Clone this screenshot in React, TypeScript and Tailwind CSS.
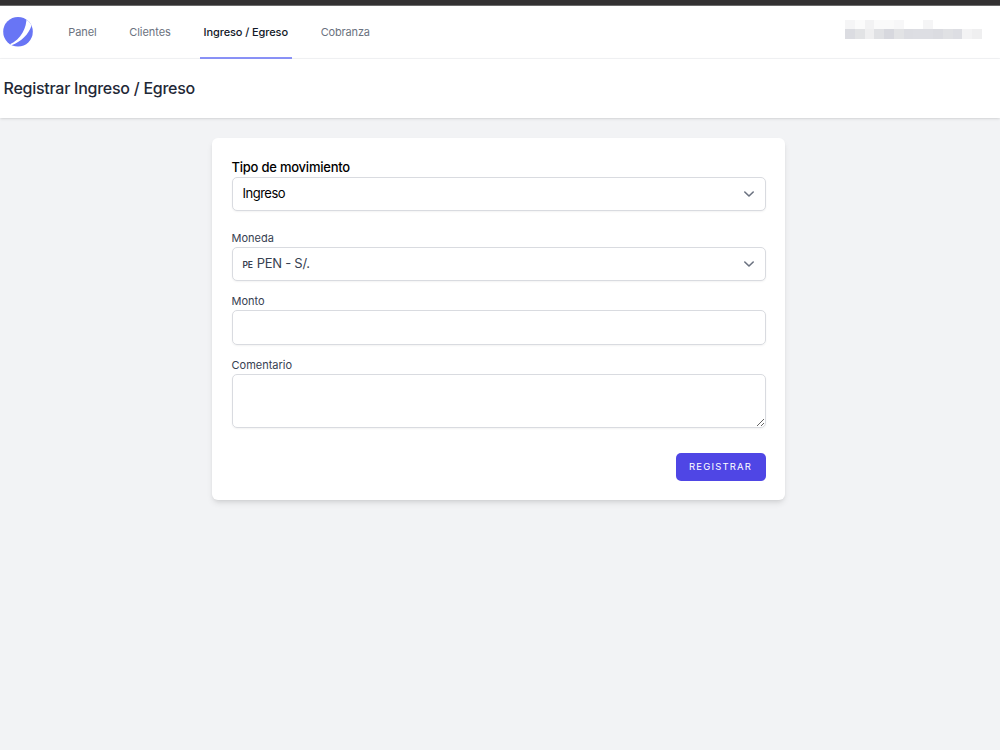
import { ReactNode } from "react"
import clsx from "clsx"

const navLinks = [
  { label: "Panel", width: "w-[35px]", tracking: "tracking-[-0.1px]" },
  { label: "Clientes", width: "w-[49px]", tracking: "tracking-[-0.05px]" },
  { label: "Ingreso / Egreso", width: "w-[91.5px]", tracking: "tracking-[-0.1px]", active: true },
  { label: "Cobranza", width: "w-[56.5px]", tracking: "tracking-[-0.15px]" },
]

const maskedTop = ["#f5f5f6", "#fbfbfb", "#f2f2f3", "#fafafa", "#fafafa", "#f7f7f8", "#fff", "#fff", "#f5f5f6", "#fff", "#fff", "#fff", "#fff", "#fff"]
const maskedBottom = ["#dbdce1", "#e2e3e5", "#efeff0", "#e0e1e4", "#d7d8de", "#e2e3e5", "#dcdde2", "#dddee3", "#dddee3", "#dbdce1", "#e0e1e4", "#dddee3", "#f3f3f4", "#efeff0"]

const Logo = () => (
  <svg viewBox="0 0 30 30" className="h-[30px] w-[30px]">
    <defs>
      <clipPath id="disc">
        <circle cx="15" cy="14.8" r="14.8" />
      </clipPath>
    </defs>
    <g clipPath="url(#disc)">
      <rect width="30" height="30" fill="#6875f5" />
      <path d="M23.6 0C23.6 11 18.5 22 6.5 27.5L8.5 28.3C18.5 24.5 25.5 17.5 28.6 8.5L31 0Z" fill="#fff" />
    </g>
  </svg>
)

const MaskedUser = () => (
  <div className="mt-[13.5px] w-[137px]">
    {[maskedTop, maskedBottom].map((row, i) => (
      <div key={i} className="flex h-[9.75px]">
        {row.map((color, j) => (
          <div key={j} className="flex-1" style={{ backgroundColor: color }} />
        ))}
      </div>
    ))}
  </div>
)

const Field = ({ label, className, children }: { label: ReactNode; className?: string; children: ReactNode }) => (
  <label className={clsx("flex flex-col", className)}>
    <span className="flex h-5 items-center whitespace-nowrap">{label}</span>
    {children}
  </label>
)

const FieldName = ({ children }: { children: ReactNode }) => (
  <span className="pt-[3px] text-[11px] leading-[17px] text-[#374151]">{children}</span>
)

const SelectBox = ({ children, className }: { children: ReactNode; className?: string }) => (
  <div
    className={clsx(
      "flex h-[34px] items-center justify-between rounded-[5px] border border-[#d9dbe0] bg-white px-[10px] shadow-xs",
      className
    )}
  >
    <span className="whitespace-nowrap">{children}</span>
    <svg viewBox="0 0 12 8" className="h-2 w-3" fill="none" stroke="#6b7280" strokeWidth="1.6" strokeLinecap="round" strokeLinejoin="round">
      <path d="M1.8 2L6 6L10.2 2" />
    </svg>
  </div>
)

const App = () => {
  return (
    <div className="flex h-[750px] w-[1000px] flex-col overflow-hidden bg-[#f2f3f5] font-[Inter,sans-serif]">
      <div className="h-[6px] shrink-0 border-b border-[#6b6b6b] bg-[#333132]" />

      {/* Navigation */}
      <nav className="flex h-[53px] shrink-0 justify-between border-b border-[#f3f4f6] bg-white pr-[18px] pl-[3px]">
        <div className="flex">
          <div className="mt-[11px] mr-8">
            <Logo />
          </div>
          <div className="flex gap-[25.5px]">
            {navLinks.map((link) => (
              <a
                key={link.label}
                className={clsx(
                  "-mb-px flex items-center justify-center border-b-2 pt-px text-[11px] whitespace-nowrap",
                  link.width,
                  link.tracking,
                  link.active ? "border-[#8b93f8] font-medium text-[#111827]" : "border-transparent text-[#6b7280]"
                )}
              >
                {link.label}
              </a>
            ))}
          </div>
        </div>
        <MaskedUser />
      </nav>

      {/* Page heading */}
      <header className="z-10 flex h-[59px] shrink-0 items-center bg-white pb-[2px] pl-[3.5px] shadow-sm">
        <h2 className="text-[16px] font-medium tracking-[-0.26px] text-[#1f2937]">Registrar Ingreso / Egreso</h2>
      </header>

      {/* Form */}
      <main className="mt-[20px] ml-[212px] flex h-[362px] w-[573px] flex-col rounded-md bg-white px-[19.5px] pt-[19px] shadow-md">
        <Field label={<span className="pt-px text-[13px] font-medium tracking-[-0.23px] text-black">Tipo de movimiento</span>}>
          <SelectBox className="text-[13px] tracking-[-0.5px] text-black">Ingreso</SelectBox>
        </Field>

        <Field className="mt-4" label={<FieldName>Moneda</FieldName>}>
          <SelectBox className="text-[13px] tracking-[-0.25px] text-[#374151]">
            <span className="mr-1 text-[8.5px] font-semibold">PE</span>PEN - S/.
          </SelectBox>
        </Field>

        <Field className="mt-[9px]" label={<FieldName>Monto</FieldName>}>
          <input className="h-[35px] rounded-[5px] border border-[#d9dbe0] px-[10px] text-[13px] shadow-xs" />
        </Field>

        <Field className="mt-[9px]" label={<FieldName>Comentario</FieldName>}>
          <textarea className="h-[54px] resize-y rounded-[5px] border border-[#d9dbe0] px-[10px] text-[13px] shadow-xs" />
        </Field>

        <button className="mt-[25px] h-7 w-[90px] self-end rounded-[5px] bg-[#4f46e5] text-[9.5px] tracking-[1.15px] text-white">
          REGISTRAR
        </button>
      </main>
    </div>
  )
}

export default App
